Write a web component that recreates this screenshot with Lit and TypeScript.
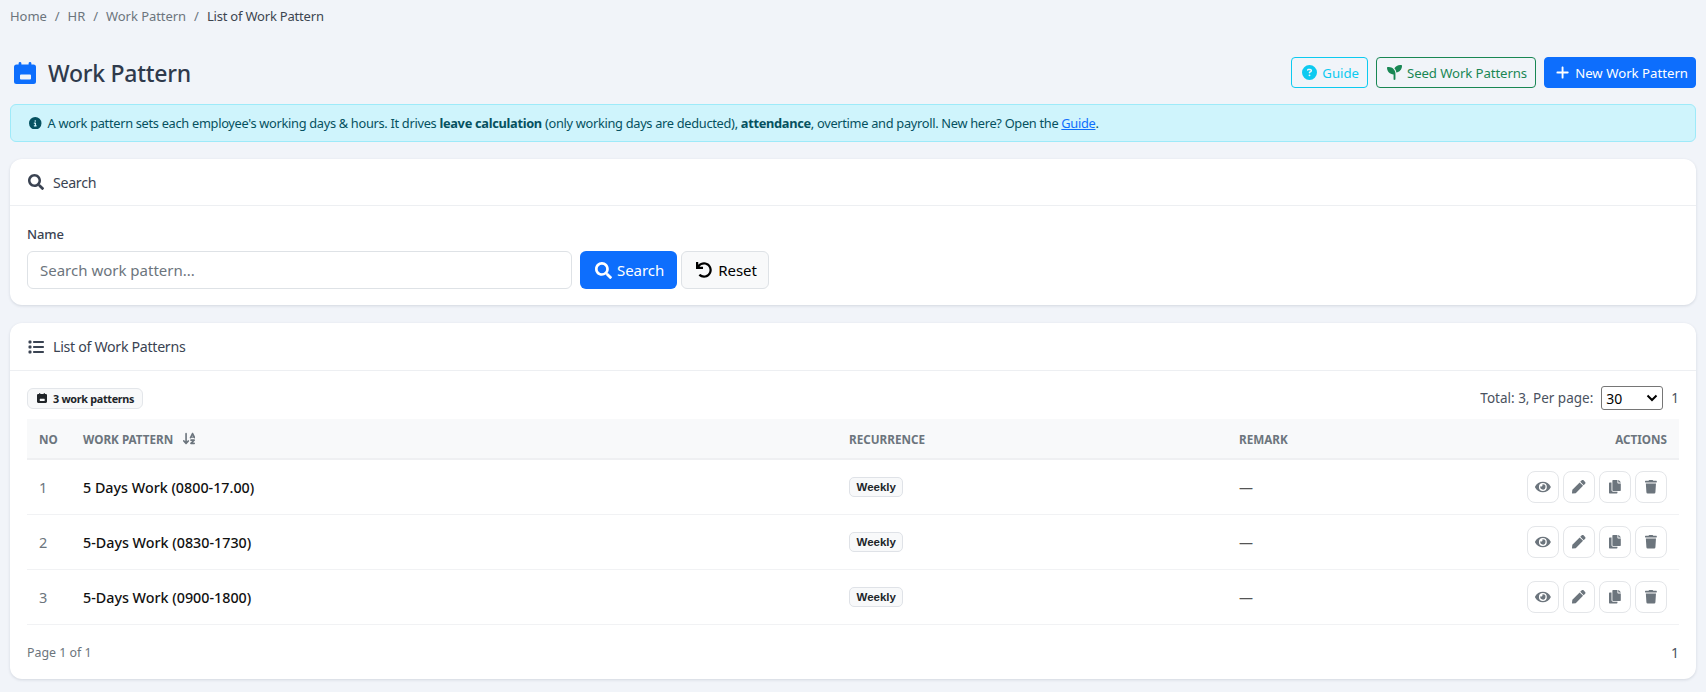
import { LitElement, html, css, svg } from "lit";
import { customElement } from "lit/decorators.js";

const I: Record<string, [number, string]> = {
  search: [512, "M505 442.7L405.3 343c-4.5-4.5-10.6-7-17-7H372c27.6-35.3 44-79.7 44-128C416 93.1 322.9 0 208 0S0 93.1 0 208s93.1 208 208 208c48.3 0 92.7-16.4 128-44v16.3c0 6.4 2.5 12.5 7 17l99.7 99.7c9.4 9.4 24.6 9.4 33.9 0l28.3-28.3c9.4-9.4 9.4-24.6.1-34zM208 336c-70.7 0-128-57.2-128-128 0-70.7 57.2-128 128-128 70.7 0 128 57.2 128 128 0 70.7-57.2 128-128 128z"],
  list: [512, "M40 48C26.7 48 16 58.7 16 72v48c0 13.3 10.7 24 24 24H88c13.3 0 24-10.7 24-24V72c0-13.3-10.7-24-24-24H40zM192 64c-17.7 0-32 14.3-32 32s14.3 32 32 32H480c17.7 0 32-14.3 32-32s-14.3-32-32-32H192zm0 160c-17.7 0-32 14.3-32 32s14.3 32 32 32H480c17.7 0 32-14.3 32-32s-14.3-32-32-32H192zm0 160c-17.7 0-32 14.3-32 32s14.3 32 32 32H480c17.7 0 32-14.3 32-32s-14.3-32-32-32H192zM16 232v48c0 13.3 10.7 24 24 24H88c13.3 0 24-10.7 24-24V232c0-13.3-10.7-24-24-24H40c-13.3 0-24 10.7-24 24zM40 368c-13.3 0-24 10.7-24 24v48c0 13.3 10.7 24 24 24H88c13.3 0 24-10.7 24-24V392c0-13.3-10.7-24-24-24H40z"],
  eye: [576, "M572.52 241.4C518.29 135.59 410.93 64 288 64S57.68 135.64 3.48 241.41a32.35 32.35 0 0 0 0 29.19C57.71 376.41 165.07 448 288 448s230.32-71.64 284.52-177.41a32.35 32.35 0 0 0 0-29.19zM288 400a144 144 0 1 1 144-144 143.93 143.93 0 0 1-144 144zm0-240a95.31 95.31 0 0 0-25.31 3.79 47.85 47.85 0 0 1-66.9 66.9A95.78 95.78 0 1 0 288 160z"],
  pen: [512, "M290.74 93.24l128.02 128.02-277.99 277.99-114.14 12.6C11.35 513.54-1.56 500.62.14 485.34l12.7-114.22 277.9-277.88zm207.2-19.06l-60.11-60.11c-18.75-18.75-49.16-18.75-67.91 0l-56.55 56.55 128.02 128.02 56.55-56.55c18.75-18.76 18.75-49.16 0-67.91z"],
  copy: [448, "M320 448v40c0 13.255-10.745 24-24 24H24c-13.255 0-24-10.745-24-24V120c0-13.255 10.745-24 24-24h72v296c0 30.879 25.121 56 56 56h168zm0-344V0H152c-13.255 0-24 10.745-24 24v368c0 13.255 10.745 24 24 24h272c13.255 0 24-10.745 24-24V128H344c-13.2 0-24-10.8-24-24zm120.971-31.029L375.029 7.029A24 24 0 0 0 358.059 0H352v96h96v-6.059a24 24 0 0 0-7.029-16.97z"],
  trash: [448, "M432 32H312l-9.4-18.7A24 24 0 0 0 281.1 0H166.8a23.72 23.72 0 0 0-21.4 13.3L136 32H16A16 16 0 0 0 0 48v32a16 16 0 0 0 16 16h416a16 16 0 0 0 16-16V48a16 16 0 0 0-16-16zM53.2 467a48 48 0 0 0 47.9 45h245.8a48 48 0 0 0 47.9-45L416 128H32z"],
  plus: [448, "M256 80c0-17.7-14.3-32-32-32s-32 14.3-32 32V224H48c-17.7 0-32 14.3-32 32s14.3 32 32 32H192V432c0 17.7 14.3 32 32 32s32-14.3 32-32V288H400c17.7 0 32-14.3 32-32s-14.3-32-32-32H256V80z"],
  info: [512, "M256 512A256 256 0 1 0 256 0a256 256 0 1 0 0 512zM216 336h24V272H216c-13.3 0-24-10.7-24-24s10.7-24 24-24h48c13.3 0 24 10.7 24 24v88h8c13.3 0 24 10.7 24 24s-10.7 24-24 24H216c-13.3 0-24-10.7-24-24s10.7-24 24-24zm40-208a32 32 0 1 1 0 64 32 32 0 1 1 0-64z"],
  question: [512, "M256 512A256 256 0 1 0 256 0a256 256 0 1 0 0 512zM169.8 165.3c7.9-22.3 29.1-37.3 52.8-37.3h58.3c34.9 0 63.1 28.3 63.1 63.1c0 22.6-12.1 43.5-31.7 54.8L280 264.4c-.2 13-10.9 23.6-24 23.6c-13.3 0-24-10.7-24-24V250.5c0-8.6 4.6-16.5 12.1-20.8l44.3-25.4c4.7-2.7 7.6-7.7 7.6-13.1c0-8.4-6.8-15.1-15.1-15.1H222.6c-3.4 0-6.4 2.1-7.5 5.3l-.4 1.2c-4.4 12.5-18.2 19-30.6 14.6s-19-18.2-14.6-30.6l.4-1.2zM224 352a32 32 0 1 1 64 0 32 32 0 1 1 -64 0z"],
  seed: [512, "M512 32c0 113.6-84.6 207.5-194.2 222c-7.1-53.4-30.6-101.6-65.3-139.3C290.8 46.3 364 0 448 0h32c17.7 0 32 14.3 32 32zM0 96C0 78.3 14.3 64 32 64H64c123.7 0 224 100.3 224 224v32V480c0 17.7-14.3 32-32 32s-32-14.3-32-32V320C100.3 320 0 219.7 0 96z"],
  undo: [512, "M212.333 224.333H12c-6.627 0-12-5.373-12-12V12C0 5.373 5.373 0 12 0h48c6.627 0 12 5.373 12 12v78.112C117.773 39.279 184.26 7.47 258.175 8.007c136.906.994 246.448 111.623 246.157 248.532C504.041 393.258 393.12 504 256.333 504c-64.089 0-122.496-24.313-166.51-64.215-5.099-4.622-5.334-12.554-.467-17.42l33.967-33.967c4.474-4.474 11.662-4.717 16.401-.525C170.76 415.336 211.58 432 256.333 432c97.268 0 176-78.716 176-176 0-97.267-78.716-176-176-176-58.496 0-110.28 28.476-142.274 72.333h98.274c6.627 0 12 5.373 12 12v48c0 6.627-5.373 12-12 12z"],
  cal: [22, "M6 0a1.4 1.4 0 0 1 1.4 1.4V2.4H14.6V1.4a1.4 1.4 0 0 1 2.8 0V2.4H19.5A2.5 2.5 0 0 1 22 4.9V19.5A2.5 2.5 0 0 1 19.5 22H2.5A2.5 2.5 0 0 1 0 19.5V4.9A2.5 2.5 0 0 1 2.5 2.4H4.6V1.4A1.4 1.4 0 0 1 6 0zM7 12.6A1 1 0 0 0 6 13.6V16.4A1 1 0 0 0 7 17.4H16A1 1 0 0 0 17 16.4V13.6A1 1 0 0 0 16 12.6H7z"],
  sort: [512, "M183.6 469.6C177.5 476.2 169 480 160 480s-17.5-3.8-23.6-10.4l-88-96c-11.9-13-11.1-33.3 2-45.2s33.3-11.1 45.2 2L128 365.7V64c0-17.7 14.3-32 32-32s32 14.3 32 32V365.7l32.4-35.3c11.9-13 32.2-13.9 45.2-2s13.9 32.2 2 45.2l-88 96zM320 320c0-17.7 14.3-32 32-32H480c12.9 0 24.6 7.8 29.6 19.8s2.2 25.7-6.9 34.9L429.3 416H480c17.7 0 32 14.3 32 32s-14.3 32-32 32H352c-12.9 0-24.6-7.8-29.6-19.8s-2.2-25.7 6.9-34.9L402.7 352H352c-17.7 0-32-14.3-32-32zM416 32c12.1 0 23.2 6.8 28.6 17.7l64 128 16 32c7.9 15.8 1.5 35-14.3 42.9s-35 1.5-42.9-14.3L460.2 224H371.8l-7.2 14.3c-7.9 15.8-27.1 22-42.9 14.3s-22-27.1-14.3-42.9l16-32 64-128C392.8 38.8 403.9 32 416 32zM395.8 176h40.4L416 135.6 395.8 176z"],
};

const icon = (n: string, size: number) => {
  const [w, d] = I[n];
  const vh = n === "cal" ? 22 : 512;
  return html`<svg class="ic" viewBox="0 0 ${w} ${vh}" height=${size} width=${(size * w) / vh} fill="currentColor">${svg`<path fill-rule="evenodd" d=${d}></path>`}</svg>`;
};

const rows = ["5 Days Work (0800-17.00)", "5-Days Work (0830-1730)", "5-Days Work (0900-1800)"];

@customElement("app-root")
export class AppRoot extends LitElement {
  static styles = css`
    :host { display: block; min-height: 692px; background: #f1f4f9; font-family: "Noto Sans", "Open Sans", sans-serif; color: #212529; font-size: 13.5px; box-sizing: border-box; padding: 0 10px; overflow: hidden; }
    * { box-sizing: border-box; }
    .ic { flex: none; display: block; }
    .crumbs { display: flex; height: 32px; align-items: center; font-size: 13px; color: #6c757d; letter-spacing: -0.05px; }
    .crumbs .sep { margin: 0 8px; }
    .crumbs .cur { color: #3c4550; letter-spacing: -0.2px; }
    .head { display: flex; justify-content: space-between; align-items: center; margin-top: 25px; height: 31px; }
    .title { display: flex; align-items: center; gap: 12px; margin: 0 0 0 4px; font-size: 23px; font-weight: 500; letter-spacing: -0.25px; color: #2f3a4c; }
    .title .ic { color: #0d6efd; }
    .btns { display: flex; gap: 8px; }
    .btn { display: flex; align-items: center; height: 31px; border: 1px solid; border-radius: 4px; font-size: 13.2px; padding: 0 8px 0 10px; gap: 5px; white-space: nowrap; }
    .guide { color: #0dcaf0; border-color: #0dcaf0; }
    .seed { color: #198754; border-color: #198754; letter-spacing: -0.1px; }
    .new { color: #fff; background: #0d6efd; border-color: #0d6efd; padding: 0 7px 0 11px; gap: 6px; }
    .alert { display: flex; align-items: center; gap: 6px; margin-top: 16px; height: 38px; border: 1px solid #9eeaf9; background: #cff4fc; color: #055160; border-radius: 6px; padding: 0 16px 0 18px; font-size: 12.8px; letter-spacing: -0.3px; white-space: nowrap; }
    .alert a { color: #0d6efd; text-decoration: underline; }
    .alert b { font-weight: 700; }
    .card { background: #fff; border-radius: 12px; box-shadow: 0 1px 3px rgba(30, 40, 70, 0.14); margin-top: 17px; }
    .card + .card { margin-top: 18px; }
    .chead { display: flex; align-items: center; gap: 9px; height: 47px; padding: 0 18px; border-bottom: 1px solid #edeff2; font-size: 14.2px; letter-spacing: -0.3px; font-weight: 400; color: #3a4352; }
    .card + .card .chead { height: 48px; }
    .sbody { padding: 19px 17px 16px; }
    label { display: block; font-size: 13px; letter-spacing: -0.1px; font-weight: 500; color: #3a4352; line-height: 18px; margin-bottom: 8px; }
    .sline { display: flex; gap: 4px; }
    .input { width: 545px; height: 38px; margin-right: 4px; border: 1px solid #dee2e6; border-radius: 6px; padding: 0 12px; display: flex; align-items: center; color: #6c757d; font-size: 15px; }
    .sbtn { display: flex; align-items: center; gap: 5px; height: 38px; border-radius: 6px; font-size: 15px; letter-spacing: -0.05px; padding: 0 13px 0 15px; }
    .sbtn.p { background: #0d6efd; color: #fff; }
    .sbtn.r { background: #f8f9fa; color: #000; border: 1px solid #dee2e6; padding: 0 11px 0 14px; gap: 6px; }
    .lbody { padding: 0 17px; }
    .bar { display: flex; align-items: center; justify-content: space-between; height: 48px; padding-top: 6px; }
    .count { display: flex; align-items: center; gap: 6px; height: 21px; padding: 0 8px 0 9px; border: 1px solid #e3e6ea; border-radius: 6px; background: #f8f9fa; font-size: 10.8px; letter-spacing: -0.3px; font-weight: 700; color: #212529; }
    .pager { display: flex; align-items: center; font-size: 13.5px; color: #4a5260; }
    .sel { display: flex; align-items: center; justify-content: space-between; width: 62px; height: 24px; border: 1px solid #767676; border-radius: 3px; margin: 0 8px 0 8px; padding: 0 4px; font-size: 14px; color: #000; background: #fff; }
    .grid { display: grid; grid-template-columns: 44px 766px 390px 1fr; }
    .th { height: 41px; background: #f8f9fa; border-bottom: 2px solid #eff0f2; display: flex; align-items: center; font-size: 11.7px; font-weight: 700; color: #6c757d; padding: 0 12px; gap: 9px; }
    .th.split { justify-content: space-between; }
    .td { height: 55px; border-bottom: 1px solid #f1f2f4; display: flex; align-items: center; padding: 0 12px; font-size: 14px; }
    .td.split { justify-content: space-between; color: #555; }
    .num { color: #6c757d; font-size: 14.5px; }
    .name { font-weight: 500; color: #111; font-size: 14.3px; }
    .weekly { display: flex; align-items: center; height: 20px; padding: 0 6.5px; border: 1px solid #dfe2e7; border-radius: 5px; background: #f8f9fa; font-family: "Liberation Sans", sans-serif; font-weight: 700; font-size: 11.5px; color: #212529; }
    .acts { display: flex; gap: 4px; }
    .act { width: 32px; height: 32px; display: flex; align-items: center; justify-content: center; border: 1px solid #e4e6e9; border-radius: 8px; color: #6c757d; background: #fff; }
    .foot { display: flex; align-items: center; justify-content: space-between; height: 54px; font-size: 12.4px; color: #6c757d; }
    .foot span:last-child { color: #4a5260; font-size: 14px; }
  `;

  render() {
    return html`
      <nav class="crumbs">
        <span>Home</span><span class="sep">/</span><span>HR</span><span class="sep">/</span><span>Work Pattern</span><span class="sep">/</span><span class="cur">List of Work Pattern</span>
      </nav>
      <div class="head">
        <h1 class="title">${icon("cal", 22)}Work Pattern</h1>
        <div class="btns">
          <div class="btn guide">${icon("question", 15)}Guide</div>
          <div class="btn seed">${icon("seed", 15)}Seed Work Patterns</div>
          <div class="btn new">${icon("plus", 15)}New Work Pattern</div>
        </div>
      </div>
      <div class="alert">
        ${icon("info", 12.5)}
        <span>A work pattern sets each employee's working days &amp; hours. It drives <b>leave calculation</b> (only working days are deducted), <b>attendance</b>, overtime and payroll. New here? Open the <a href="#">Guide</a>.</span>
      </div>
      <section class="card">
        <div class="chead">${icon("search", 16)}Search</div>
        <div class="sbody">
          <label>Name</label>
          <div class="sline">
            <div class="input">Search work pattern...</div>
            <div class="sbtn p">${icon("search", 17)}Search</div>
            <div class="sbtn r">${icon("undo", 16)}Reset</div>
          </div>
        </div>
      </section>
      <section class="card">
        <div class="chead">${icon("list", 16)}List of Work Patterns</div>
        <div class="lbody">
          <div class="bar">
            <div class="count">${icon("cal", 10)}3 work patterns</div>
            <div class="pager">Total: 3, Per page:
              <div class="sel">30 <svg width="12" height="8" viewBox="0 0 12 8" fill="none" stroke="#000" stroke-width="2"><path d="M1.5 1.5 6 6l4.5-4.5"></path></svg></div>1
            </div>
          </div>
          <div class="grid">
            <div class="th">NO</div>
            <div class="th">WORK PATTERN ${icon("sort", 13)}</div>
            <div class="th">RECURRENCE</div>
            <div class="th split"><span>REMARK</span><span>ACTIONS</span></div>
            ${rows.map((r, i) => html`
              <div class="td num">${i + 1}</div>
              <div class="td name">${r}</div>
              <div class="td"><span class="weekly">Weekly</span></div>
              <div class="td split"><span>—</span>
                <div class="acts">
                  <div class="act">${icon("eye", 14)}</div>
                  <div class="act">${icon("pen", 13.5)}</div>
                  <div class="act">${icon("copy", 13.5)}</div>
                  <div class="act">${icon("trash", 13.5)}</div>
                </div>
              </div>`)}
          </div>
          <div class="foot"><span>Page 1 of 1</span><span>1</span></div>
        </div>
      </section>
    `;
  }
}
